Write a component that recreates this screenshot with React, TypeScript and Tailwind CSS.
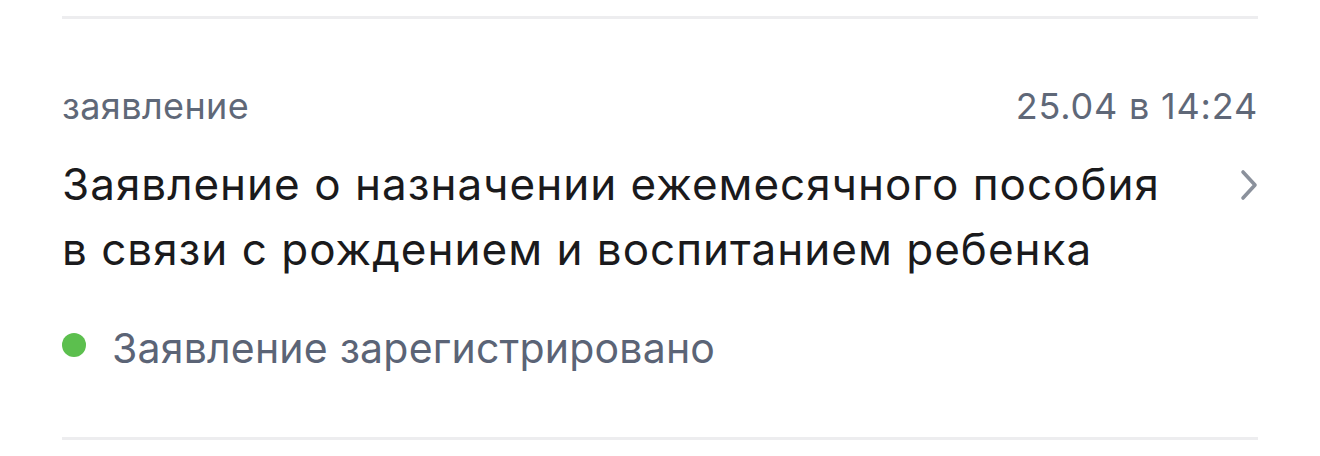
export default function App() {
  return (
    <div className="flex h-[456px] w-[1320px] flex-col bg-white px-[62px] font-['Inter','Noto_Sans',sans-serif]">
      <div className="mt-[16px] h-[3px] w-full bg-[#ededef]" />
      <div className="flex flex-col pt-[67px]">
        <div className="flex items-center justify-between text-[36px] leading-[40px] text-[#5f6878]">
          <span className="tracking-[0.4px]">заявление</span>
          <span className="tracking-[0.8px]">25.04 в 14:24</span>
        </div>
        <div className="mt-[26px] flex items-start justify-between">
          <p className="text-[44px] leading-[65px] tracking-[1px] text-[#1a1a1c]">
            Заявление о назначении ежемесячного пособия
            <br />
            в связи с рождением и воспитанием ребенка
          </p>
          <svg className="mt-[17px] h-[32px] w-[18px] text-[#8b919c]" viewBox="0 0 18 32" fill="none">
            <polyline
              points="3,3 15,16 3,29"
              stroke="currentColor"
              strokeWidth="3.6"
              strokeLinecap="round"
              strokeLinejoin="round"
            />
          </svg>
        </div>
        <div className="mt-[42px] flex items-start gap-[26px]">
          <span className="mt-[9px] h-[24px] w-[24px] shrink-0 rounded-full bg-[#5cbf4e]" />
          <span className="text-[41px] leading-[48px] tracking-[0.2px] text-[#5b6476]">Заявление зарегистрировано</span>
        </div>
      </div>
      <div className="mt-auto mb-[16px] h-[3px] w-full bg-[#ededef]" />
    </div>
  );
}
